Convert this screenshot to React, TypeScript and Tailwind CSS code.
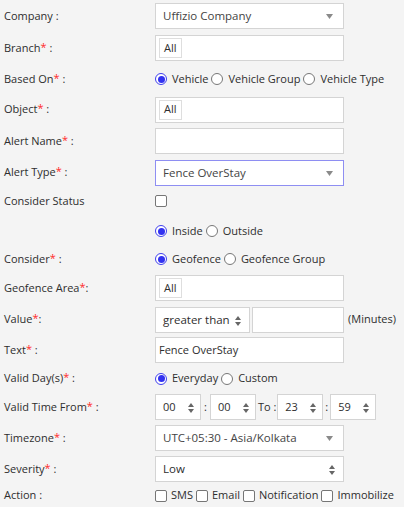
import type { ReactNode } from 'react';

const font = { fontFamily: '"Open Sans", "Liberation Sans", sans-serif' };

function Star() {
  return <span className="text-[#ff2a2a] relative top-[-1px] text-[11px] leading-none">*</span>;
}

function Row({ h, label, req, colon = ' :', children }: { h: string; label?: string; req?: boolean; colon?: string; children?: ReactNode }) {
  return (
    <div className={`flex items-center ${h}`}>
      <div className="w-[155px] shrink-0 pl-[4px] whitespace-nowrap">
        {label}
        {req && <Star />}
        {label && colon}
      </div>
      <div className="flex items-center min-w-0 whitespace-nowrap">{children}</div>
    </div>
  );
}

function Box({ children, className = 'w-[189px]', focus }: { children?: ReactNode; className?: string; focus?: boolean }) {
  return (
    <div
      className={`relative h-[26px] flex items-center bg-white border ${
        focus ? 'border-[#8e8ef2]' : 'border-[#d4d4d4]'
      } ${className}`}
    >
      {children}
    </div>
  );
}

function Chip() {
  return (
    <span className="ml-[3px] h-[20px] px-[4px] flex items-center border border-[#dedede] text-[11px]">All</span>
  );
}

function Caret() {
  return (
    <svg className="absolute right-[10px] top-[10px]" width="7" height="5" viewBox="0 0 7 5">
      <path d="M0 0h7L3.5 5z" fill="#8a8a8a" />
    </svg>
  );
}

function UpDown({ right = 'right-[8px]' }: { right?: string }) {
  return (
    <svg className={`absolute ${right} top-[8px]`} width="6" height="10" viewBox="0 0 6 10">
      <path d="M0 4h6L3 0z M0 6h6L3 10z" fill="#666" />
    </svg>
  );
}

function Radio({ on, label }: { on?: boolean; label: string }) {
  return (
    <span className="flex items-center mr-[3px]">
      <span
        className={`w-[12px] h-[12px] rounded-full border flex items-center justify-center bg-white ${
          on ? 'border-[#4040ee]' : 'border-[#777]'
        }`}
      >
        {on && <span className="w-[7px] h-[7px] rounded-full bg-[#3232f0]" />}
      </span>
      <span className="ml-[5px]">{label}</span>
    </span>
  );
}

function Check({ label }: { label?: string }) {
  return (
    <span className="flex items-center mr-[3px]">
      <span className="w-[12px] h-[12px] rounded-[2px] border border-[#767676] bg-white" />
      {label && <span className="ml-[4px]">{label}</span>}
    </span>
  );
}

function TimeBox({ v }: { v: string }) {
  return (
    <Box className="w-[46px]">
      <span className="pl-[7px]">{v}</span>
      <UpDown right="right-[6px]" />
    </Box>
  );
}

export default function App() {
  return (
    <div className="w-[404px] h-[507px] bg-[#f4f4f4] text-[#2e2e2e] text-[11px] overflow-hidden" style={font}>
      <Row h="h-[32px]" label="Company">
        <Box>
          <span className="pl-[7px] text-[11.5px] text-[#444]">Uffizio Company</span>
          <Caret />
        </Box>
      </Row>
      <Row h="h-[32px]" label="Branch" req>
        <Box><Chip /></Box>
      </Row>
      <Row h="h-[30px]" label="Based On" req>
        <Radio on label="Vehicle" />
        <Radio label="Vehicle Group" />
        <Radio label="Vehicle Type" />
      </Row>
      <Row h="h-[31px]" label="Object" req>
        <Box><Chip /></Box>
      </Row>
      <Row h="h-[32px]" label="Alert Name" req>
        <Box />
      </Row>
      <Row h="h-[31px]" label="Alert Type" req>
        <Box focus>
          <span className="pl-[7px] text-[11.5px] text-[#444]">Fence OverStay</span>
          <Caret />
        </Box>
      </Row>
      <Row h="h-[26px]" label="Consider Status" colon="">
        <Check />
      </Row>
      <Row h="h-[32px]">
        <span className="pt-[2px] flex">
          <Radio on label="Inside" />
          <Radio label="Outside" />
        </span>
      </Row>
      <Row h="h-[26px]" label="Consider" req>
        <Radio on label="Geofence" />
        <Radio label="Geofence Group" />
      </Row>
      <Row h="h-[32px]" label="Geofence Area" req colon=":">
        <Box><Chip /></Box>
      </Row>
      <Row h="h-[31px]" label="Value" req colon=":">
        <Box className="w-[95px]">
          <span className="pl-[7px] text-[11.5px]">greater than</span>
          <UpDown />
        </Box>
        <div className="ml-[2px]">
          <Box className="w-[92px]" />
        </div>
        <span className="ml-[4px]">(Minutes)</span>
      </Row>
      <Row h="h-[30px]" label="Text" req>
        <Box>
          <span className="pl-[3px]">Fence OverStay</span>
        </Box>
      </Row>
      <Row h="h-[27px]" label="Valid Day(s)" req>
        <Radio on label="Everyday" />
        <Radio label="Custom" />
      </Row>
      <Row h="h-[30px]" label="Valid Time From" req>
        <TimeBox v="00" />
        <span className="mx-[3px]">:</span>
        <TimeBox v="00" />
        <span className="ml-[2px] mr-[1px]">To :</span>
        <TimeBox v="23" />
        <span className="mx-[2px]">:</span>
        <TimeBox v="59" />
      </Row>
      <Row h="h-[32px]" label="Timezone" req>
        <Box>
          <span className="pl-[7px] text-[11.5px] text-[#444]">UTC+05:30 - Asia/Kolkata</span>
          <Caret />
        </Box>
      </Row>
      <Row h="h-[30px]" label="Severity" req>
        <Box>
          <span className="pl-[7px] text-[11.5px]">Low</span>
          <UpDown />
        </Box>
      </Row>
      <Row h="h-[23px]" label="Action">
        <Check label="SMS" />
        <Check label="Email" />
        <Check label="Notification" />
        <Check label="Immobilize" />
      </Row>
    </div>
  );
}
